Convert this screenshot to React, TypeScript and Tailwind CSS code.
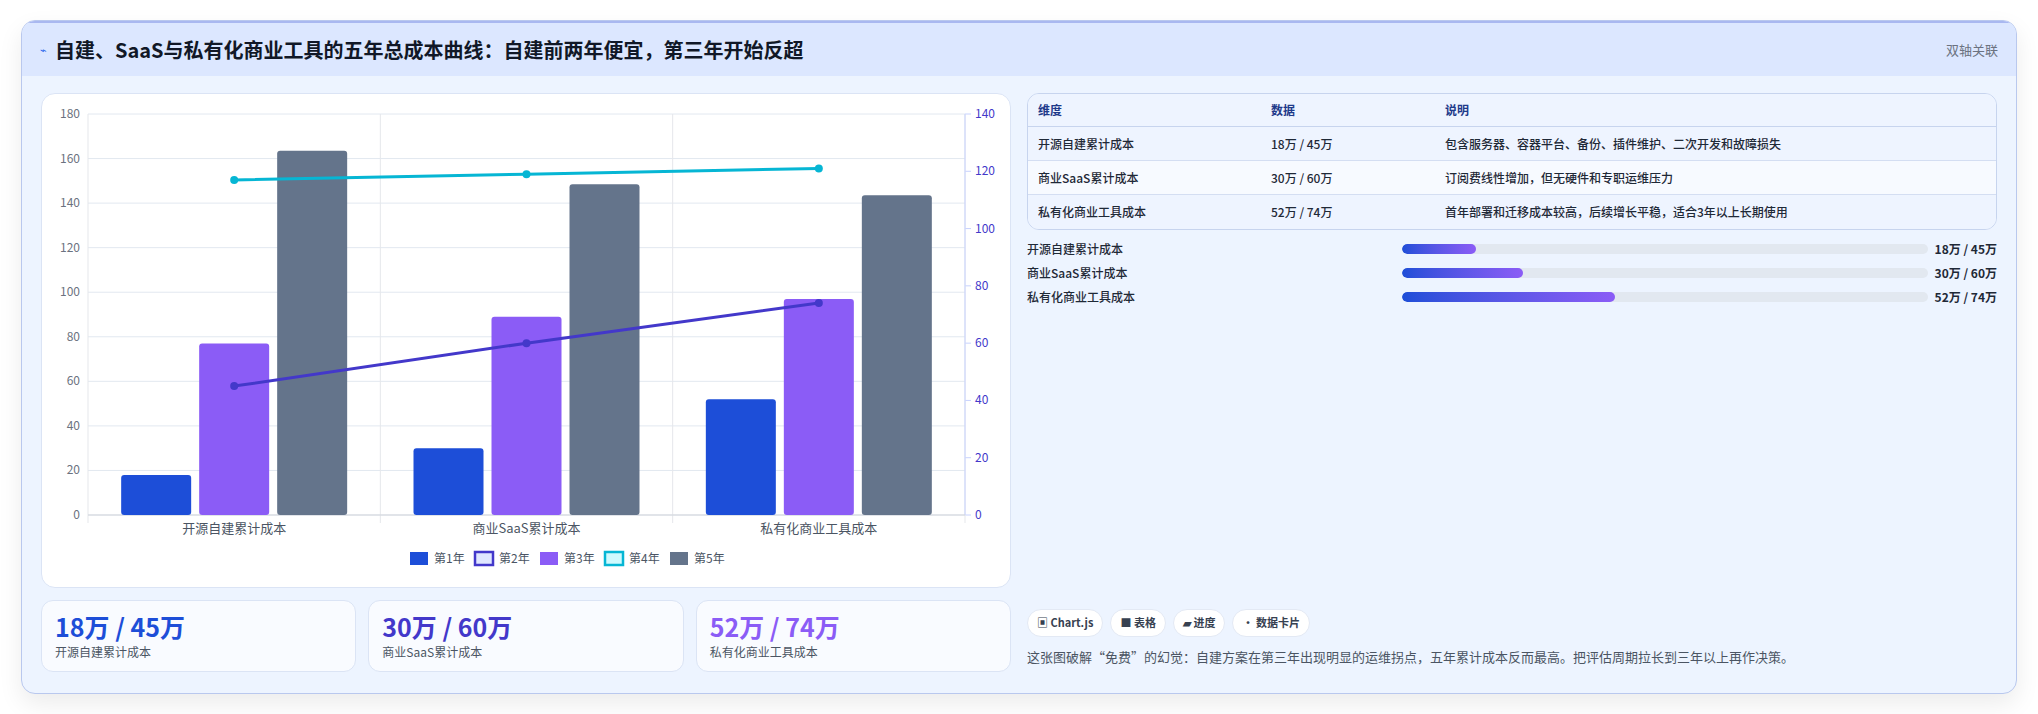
import React from "react";

const F = { fontFamily: '"Noto Sans CJK SC", "Noto Sans", sans-serif' };

function Chart() {
  const L = 46, R = 923, T = 20, B = 421;
  const H = B - T;
  const yL = (v: number) => B - (v / 180) * H;
  const yR = (v: number) => B - (v / 140) * H;
  const cw = (R - L) / 3;
  const cats = ["开源自建累计成本", "商业SaaS累计成本", "私有化商业工具成本"];
  const y1 = [18, 30, 52], y3 = [77, 89, 97], y5 = [163.5, 148.5, 143.5];
  const y2 = [45, 60, 74], y4 = [117, 119, 121];
  const bw = 70, gap = 8;
  const cx = (i: number) => L + cw * i + cw / 2;
  return (
    <svg width="970" height="495" style={F}>
      {[0, 20, 40, 60, 80, 100, 120, 140, 160, 180].map((v) => (
        <g key={v}>
          <line x1={L} x2={R} y1={yL(v)} y2={yL(v)} stroke="#e2e8f0" />
          <text x={38} y={yL(v) + 4} textAnchor="end" fontSize="12" fill="#6b7280">{v}</text>
        </g>
      ))}
      {[0, 20, 40, 60, 80, 100, 120, 140].map((v) => (
        <g key={v}>
          <line x1={R} x2={R + 6} y1={yR(v)} y2={yR(v)} stroke="#c7d2fe" />
          <text x={R + 10} y={yR(v) + 4} fontSize="12" fill="#4338ca">{v}</text>
        </g>
      ))}
      {[0, 1, 2, 3].map((i) => (
        <line key={i} x1={L + cw * i} x2={L + cw * i} y1={T} y2={B + 8} stroke="#e5e7eb" />
      ))}
      <line x1={R} x2={R} y1={T} y2={B} stroke="#c7d2fe" />
      <line x1={L} x2={R} y1={B} y2={B} stroke="#d1d5db" />
      {cats.map((c, i) => {
        const x = cx(i);
        const bars: [number, string][] = [[y1[i], "#1d4ed8"], [y3[i], "#8b5cf6"], [y5[i], "#64748b"]];
        return (
          <g key={c}>
            {bars.map(([v, col], j) => {
              const bx = x - bw * 1.5 - gap + j * (bw + gap);
              return <rect key={j} x={bx} y={yL(v)} width={bw} height={B - yL(v)} rx="3" fill={col} />;
            })}
            <text x={x} y={439} textAnchor="middle" fontSize="13" fill="#4b5563">{c}</text>
          </g>
        );
      })}
      <polyline points={y2.map((v, i) => `${cx(i)},${yR(v)}`).join(" ")} fill="none" stroke="#4338ca" strokeWidth="3" />
      <polyline points={y4.map((v, i) => `${cx(i)},${yR(v)}`).join(" ")} fill="none" stroke="#06b6d4" strokeWidth="3" />
      {y2.map((v, i) => <circle key={i} cx={cx(i)} cy={yR(v)} r="4" fill="#4338ca" />)}
      {y4.map((v, i) => <circle key={i} cx={cx(i)} cy={yR(v)} r="4" fill="#06b6d4" />)}
      {/* legend */}
      {[
        ["第1年", "#1d4ed8", "#1d4ed8"],
        ["第2年", "#e0e7ff", "#4338ca"],
        ["第3年", "#8b5cf6", "#8b5cf6"],
        ["第4年", "#cffafe", "#06b6d4"],
        ["第5年", "#64748b", "#64748b"],
      ].map(([t, f, s], i) => {
        const x0 = 368 + i * 65;
        return (
          <g key={t}>
            <rect x={x0} y={458} width={18} height={13} fill={f} stroke={s} strokeWidth={s === f ? 0 : 2.5} />
            <text x={x0 + 24} y={469} fontSize="12" fill="#4b5563">{t}</text>
          </g>
        );
      })}
    </svg>
  );
}

const rows = [
  ["开源自建累计成本", "18万 / 45万", "包含服务器、容器平台、备份、插件维护、二次开发和故障损失"],
  ["商业SaaS累计成本", "30万 / 60万", "订阅费线性增加，但无硬件和专职运维压力"],
  ["私有化商业工具成本", "52万 / 74万", "首年部署和迁移成本较高，后续增长平稳，适合3年以上长期使用"],
];

export default function App() {
  return (
    <div className="w-[2038px] h-[714px] bg-white pt-[20px] pl-[21px]" style={F}>
      <div className="w-[1996px] h-[674px] rounded-[14px] border border-[#b9c8ee] bg-[#edf4ff] shadow-[0_10px_24px_rgba(0,0,0,0.08)] overflow-hidden flex flex-col">
        <div className="h-[55px] shrink-0 bg-[#dce7ff] border-t-2 border-[#a9b8f0] flex items-center justify-between px-[18px]">
          <div className="flex items-center gap-[8px]">
            <span className="text-[11px] text-[#2563eb]">⌁</span>
            <span className="text-[20px] font-bold text-[#111827]">自建、SaaS与私有化商业工具的五年总成本曲线：自建前两年便宜，第三年开始反超</span>
          </div>
          <span className="text-[13px] text-[#6b7280]">双轴关联</span>
        </div>
        <div className="flex gap-[16px] px-[19px] pt-[17px]">
          <div className="w-[970px] flex flex-col gap-[12px]">
            <div className="h-[495px] bg-white rounded-[14px] border border-[#dbe4f5]">
              <Chart />
            </div>
            <div className="flex gap-[12px]">
              {[
                ["18万 / 45万", "开源自建累计成本", "text-[#1d4ed8]"],
                ["30万 / 60万", "商业SaaS累计成本", "text-[#4338ca]"],
                ["52万 / 74万", "私有化商业工具成本", "text-[#8b5cf6]"],
              ].map(([v, l, c]) => (
                <div key={l} className="flex-1 h-[72px] rounded-[12px] border border-[#dbe4f5] bg-[#f9fbff] px-[13px] pt-[9px]">
                  <div className={`text-[25px] font-bold leading-[32px] ${c}`}>{v}</div>
                  <div className="text-[12px] text-[#4b5563] mt-[1px]">{l}</div>
                </div>
              ))}
            </div>
          </div>
          <div className="flex-1 flex flex-col h-[579px]">
            <div className="rounded-[12px] border border-[#c7d4ee] overflow-hidden">
              <div className="h-[33px] flex items-center bg-[#eef4ff] border-b border-[#c7d4ee] text-[12px] font-bold text-[#1e3a8a] px-[10px]">
                <span className="w-[233px]">维度</span><span className="w-[174px]">数据</span><span>说明</span>
              </div>
              {rows.map((r, i) => (
                <div key={i} className={`h-[34px] flex items-center text-[12px] font-medium text-[#1f2937] px-[10px] ${i === 1 ? "bg-[#f7faff]" : "bg-[#eef4ff]"} ${i < 2 ? "border-b border-[#d4def2]" : ""}`}>
                  <span className="w-[233px]">{r[0]}</span><span className="w-[174px]">{r[1]}</span><span>{r[2]}</span>
                </div>
              ))}
            </div>
            <div className="flex flex-col gap-[12px] mt-[13px]">
              {[
                ["开源自建累计成本", "18万 / 45万", 14],
                ["商业SaaS累计成本", "30万 / 60万", 23],
                ["私有化商业工具成本", "52万 / 74万", 40.5],
              ].map(([l, v, p]) => (
                <div key={l as string} className="h-[12px] flex items-center text-[12px] font-medium text-[#1f2937]">
                  <span className="w-[375px]">{l}</span>
                  <div className="w-[526px] h-[10px] rounded-full bg-[#e2e8f0] overflow-hidden">
                    <div className="h-full rounded-full bg-gradient-to-r from-[#1d4ed8] to-[#8b5cf6]" style={{ width: `${p}%` }} />
                  </div>
                  <span className="flex-1 text-right font-bold">{v}</span>
                </div>
              ))}
            </div>
            <div className="mt-auto flex gap-[7px] mb-[10px]">
              {["▣ Chart.js", "■ 表格", "▰ 进度", "• 数据卡片"].map((t) => (
                <span key={t} className="h-[28px] px-[9px] flex items-center rounded-full bg-white border border-[#e3e9f4] text-[11px] font-bold text-[#374151]">{t}</span>
              ))}
            </div>
            <div className="text-[13px] text-[#4b5563] mb-[6px]">这张图破解“免费”的幻觉：自建方案在第三年出现明显的运维拐点，五年累计成本反而最高。把评估周期拉长到三年以上再作决策。</div>
          </div>
        </div>
      </div>
    </div>
  );
}
